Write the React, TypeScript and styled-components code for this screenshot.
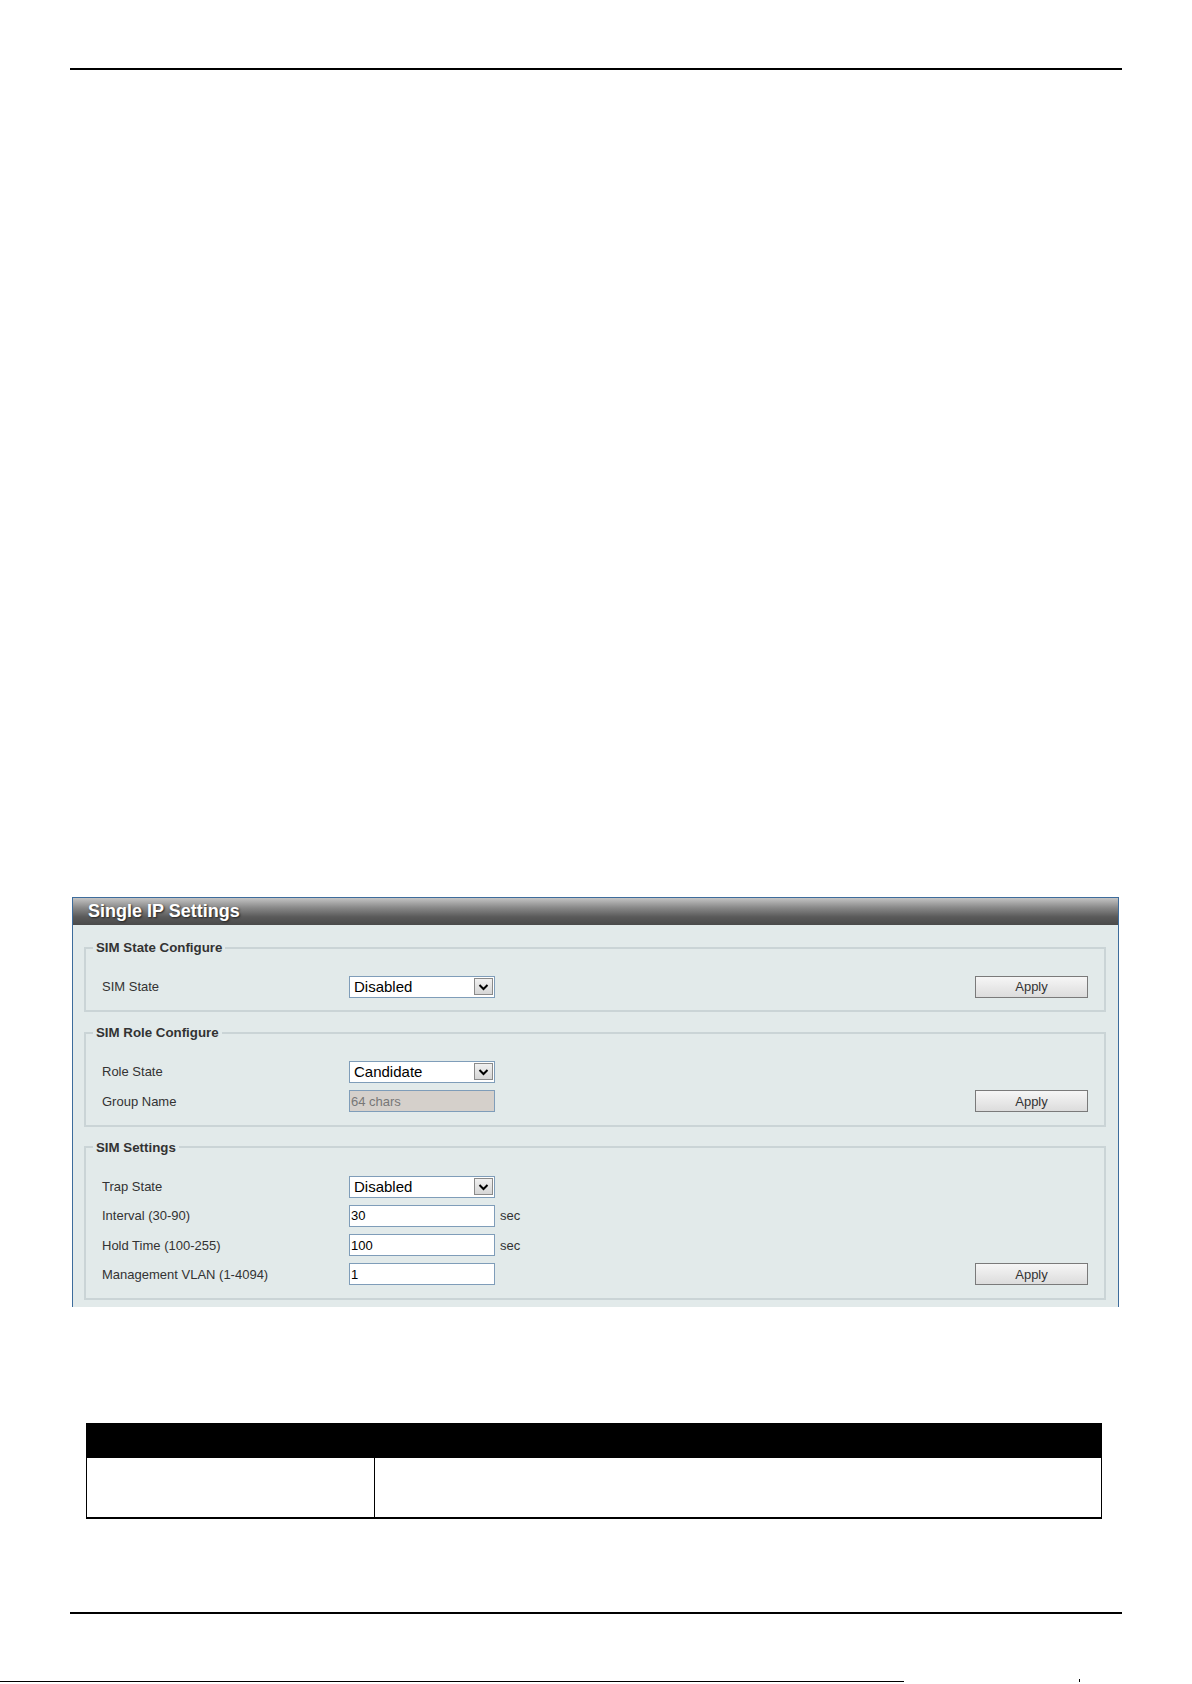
import { createGlobalStyle, styled } from "styled-components";

const GlobalStyle = createGlobalStyle`
  html, body {
    margin: 0;
    padding: 0;
    background: #ffffff;
  }
  body {
    font-family: "Liberation Sans", Arial, sans-serif;
    color: #222;
  }
`;

const Page = styled.div`
  width: 1192px;
  height: 1684px;
  display: flex;
  flex-direction: column;
  overflow: hidden;
`;

const Sheet = styled.div`
  margin-left: 70px;
  width: 1052px;
  display: flex;
  flex-direction: column;
`;

const Rule = styled.div<{ $top: number }>`
  margin-top: ${(p) => p.$top}px;
  height: 2px;
  background: #000;
`;

const Panel = styled.section`
  margin-top: 827px;
  margin-left: 2px;
  width: 1047px;
  box-sizing: border-box;
  border: 1px solid #3d6c9c;
  border-bottom: none;
  background: #e2eaea;
`;

const PanelHeader = styled.div`
  height: 27px;
  padding-left: 15px;
  display: flex;
  align-items: center;
  background: linear-gradient(#c4c4c4 0%, #8a8a8a 35%, #5a5a5a 70%, #4a4a4a 100%);
  color: #fff;
  font-weight: bold;
  font-size: 18px;
  text-shadow: 1px 1px 2px #222;
`;

const PanelBody = styled.div`
  padding: 15px 12px 7px 11px;
  display: flex;
  flex-direction: column;
  gap: 13px;
`;

const Group = styled.fieldset`
  margin: 0;
  padding: 17px 16px 9px 16px;
  border: 2px solid #cad4d6;
  display: flex;
  flex-direction: column;
`;

const Legend = styled.legend`
  margin-left: -9px;
  padding: 0 3px;
  font-size: 13.3px;
  line-height: 15px;
  font-weight: bold;
  color: #333;
`;

const Row = styled.div`
  height: 29.3px;
  display: flex;
  align-items: center;
`;

const Label = styled.span`
  width: 247px;
  font-size: 13px;
  color: #333;
`;

const Select = styled.div`
  width: 146px;
  height: 22px;
  box-sizing: border-box;
  border: 1px solid #7f9db9;
  background: #fff;
  display: flex;
  align-items: center;
  justify-content: space-between;
  padding: 0 1px 0 4px;
  font-size: 15px;
  color: #000;
`;

const Arrow = styled.span`
  width: 19px;
  height: 17px;
  box-sizing: border-box;
  border: 1px solid #8a8a8a;
  background: linear-gradient(#f0f0f0, #d6d6d6);
  display: flex;
  align-items: center;
  justify-content: center;
`;

const Input = styled.div<{ $disabled?: boolean }>`
  width: 146px;
  height: 22px;
  box-sizing: border-box;
  border: 1px solid #7f9db9;
  background: ${(p) => (p.$disabled ? "#d5d0cb" : "#fff")};
  color: ${(p) => (p.$disabled ? "#777" : "#000")};
  display: flex;
  align-items: center;
  padding-left: 1px;
  font-size: 13px;
`;

const Unit = styled.span`
  margin-left: 5px;
  font-size: 13px;
  color: #333;
`;

const ApplyButton = styled.button`
  margin-left: auto;
  width: 113px;
  height: 22px;
  border: 1px solid #7a7a7a;
  border-radius: 0;
  background: linear-gradient(#f6f6f6, #dcdcdc);
  font-family: "Liberation Sans", Arial, sans-serif;
  font-size: 13px;
  color: #333;
  padding: 0;
`;

const Table = styled.div`
  margin-top: 116px;
  margin-left: 16px;
  width: 1016px;
  box-sizing: border-box;
  border: 1px solid #000;
  border-bottom-width: 2px;
`;

const TableHead = styled.div`
  height: 34px;
  background: #000;
`;

const TableRow = styled.div`
  height: 59px;
  display: grid;
  grid-template-columns: 287px 1fr;
`;

const Cell = styled.div`
  & + & {
    border-left: 1px solid #000;
  }
`;

const Footer = styled.div`
  margin-top: 67px;
  height: 1px;
  display: flex;
  align-items: flex-end;
`;

const FooterLine = styled.div`
  width: 904px;
  height: 1px;
  background: #000;
`;

const FooterTick = styled.div`
  margin-left: 175px;
  width: 1px;
  height: 3px;
  background: #000;
`;

const Chevron = () => (
  <svg width="11" height="8" viewBox="0 0 11 8">
    <path d="M1.5 2 L5.5 6 L9.5 2" fill="none" stroke="#000" strokeWidth="2" />
  </svg>
);

const Dropdown = ({ value }: { value: string }) => (
  <Select>
    <span>{value}</span>
    <Arrow>
      <Chevron />
    </Arrow>
  </Select>
);

const App = () => {
  return (
    <>
      <GlobalStyle />
      <Page>
        <Sheet>
          <Rule $top={68} />
          <Panel>
            <PanelHeader>Single IP Settings</PanelHeader>
            <PanelBody>
              <Group>
                <Legend>SIM State Configure</Legend>
                <Row>
                  <Label>SIM State</Label>
                  <Dropdown value="Disabled" />
                  <ApplyButton>Apply</ApplyButton>
                </Row>
              </Group>
              <Group>
                <Legend>SIM Role Configure</Legend>
                <Row>
                  <Label>Role State</Label>
                  <Dropdown value="Candidate" />
                </Row>
                <Row>
                  <Label>Group Name</Label>
                  <Input $disabled>64 chars</Input>
                  <ApplyButton>Apply</ApplyButton>
                </Row>
              </Group>
              <Group>
                <Legend>SIM Settings</Legend>
                <Row>
                  <Label>Trap State</Label>
                  <Dropdown value="Disabled" />
                </Row>
                <Row>
                  <Label>Interval (30-90)</Label>
                  <Input>30</Input>
                  <Unit>sec</Unit>
                </Row>
                <Row>
                  <Label>Hold Time (100-255)</Label>
                  <Input>100</Input>
                  <Unit>sec</Unit>
                </Row>
                <Row>
                  <Label>Management VLAN (1-4094)</Label>
                  <Input>1</Input>
                  <ApplyButton>Apply</ApplyButton>
                </Row>
              </Group>
            </PanelBody>
          </Panel>
          <Table>
            <TableHead />
            <TableRow>
              <Cell />
              <Cell />
            </TableRow>
          </Table>
          <Rule $top={93} />
        </Sheet>
        <Footer>
          <FooterLine />
          <FooterTick />
        </Footer>
      </Page>
    </>
  );
};

export default App;
